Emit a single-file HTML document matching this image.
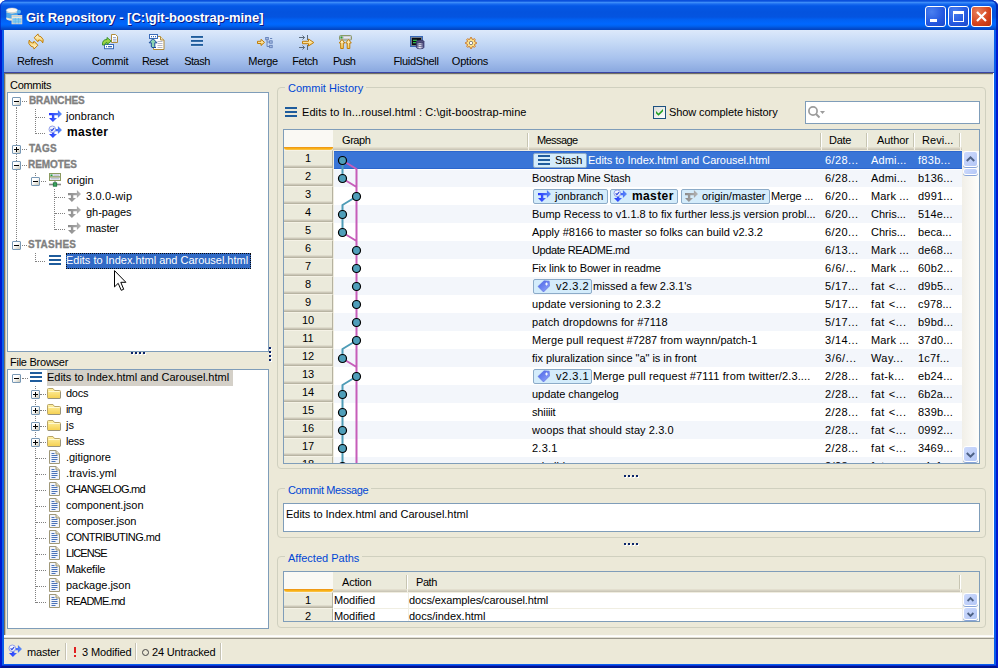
<!DOCTYPE html><html><head><meta charset="utf-8"><title>Git Repository</title><style>
*{box-sizing:border-box;margin:0;padding:0}
html,body{width:998px;height:668px;overflow:hidden}
body{position:relative;background:#fff;font-family:"Liberation Sans",sans-serif;font-size:11px;color:#000;line-height:13px}
.abs,.t,.box,.grp,.grpl,.tbl,svg,.hd,.hsep,.rh,.row,.vd,.hdot,.exp,.tag,.sb{position:absolute}
svg{overflow:visible}
.t{white-space:pre;line-height:13px;height:13px}
.b{font-weight:bold}
.g{color:#808080;font-weight:bold;-webkit-text-stroke:.3px #808080}
.wh{color:#fff}
#frame{left:0;top:0;width:998px;height:668px;background:#0a5eea;border-radius:8px 8px 0 0/6px 6px 0 0;border-left:2px solid #0019cf;border-right:2px solid #0019cf;border-bottom:2px solid #00138c;box-shadow:inset 0 -1px 0 #0831d9}
#title{left:0;top:0;width:998px;height:30px;box-shadow:inset -2px 0 0 rgba(0,20,160,.75),inset 1px 0 0 rgba(0,30,190,.6);border-radius:8px 8px 0 0/6px 6px 0 0;
 background:linear-gradient(to bottom,#0a50dc 0,#0a50dc 1px,#3c8cf8 2.500px,#1a6cf0 4px,#0458e6 6px,#0453de 12px,#0454e0 17px,#0162f4 20px,#0068ff 24px,#0062f0 26px,#0350d4 28px,#0242bc 30px)}
#ttext{left:26px;top:10px;font-weight:bold;font-size:13px;color:#fff;text-shadow:1px 1px 0 #0a1883;line-height:16px;height:16px}
#toolbar{left:4px;top:30px;width:990px;height:42px;background:linear-gradient(to bottom,#dde9fb 0,#c6daf6 12px,#a9c3ee 28px,#8caae0 41px)}
#client{left:4px;top:72px;width:990px;height:592px;background:#ece9d8;border-top:1px solid #3a45a5}
.tbl{top:55px;width:80px;text-align:center;line-height:13px;height:13px;white-space:pre}
.box{background:#fff;border:1px solid #7f9db9}
.grp{border:1px solid #d0d0bf;border-radius:4px}
.grpl{background:#ece9d8;color:#0046d5;padding:0 3px;white-space:pre;line-height:13px;height:13px}
.hd{background:#ebeadb;box-shadow:inset 0 -1px 0 #f0ede0,inset 0 -2px 0 #cbc7b8,inset 0 -3px 0 #d6d2c2,inset 0 -4px 0 #e2dece}
.hsep{width:2px;border-left:1px solid #c7c5b2;border-right:1px solid #fff}
.rh{background:#ebeadb;text-align:center;line-height:15px;border-top:1px solid #f5f2e6;border-right:1px solid #b5b2a0;box-shadow:inset 0 -1px 0 #b8b4a2,inset 0 -2px 0 #cbc7b8,inset 0 -3px 0 #dedbcb}
.row{left:334px;width:628px;height:18px}
.vd{width:0;border-left:1px dotted #808080}
.hdot{height:0;border-top:1px dotted #808080}
.exp{width:9px;height:9px;border:1px solid #7898b5;border-radius:1px;background:linear-gradient(135deg,#fff 0,#fff 40%,#c9c6b6 100%)}
.exp:before{content:"";position:absolute;left:1px;top:3px;width:5px;height:1px;background:#000}
.exp.p:after{content:"";position:absolute;left:3px;top:1px;width:1px;height:5px;background:#000}
.tag{height:15px;border:1px solid #8cabc8;background:#d4ecfb;border-radius:2px}
.sb{width:15px;border:1px solid #fff;border-radius:3px;background:linear-gradient(135deg,#cddafc,#b4c7f6);box-shadow:0 1px 0 #88a4d8}
</style></head><body>
<svg width="0" height="0" style="left:0;top:0"><defs><linearGradient id="gb" x1="0" y1="0" x2="1" y2="0"><stop offset="0" stop-color="#2233ff"/><stop offset="1" stop-color="#5d90f5"/></linearGradient><linearGradient id="gg" x1="0" y1="0" x2="1" y2="0"><stop offset="0" stop-color="#8a8a8a"/><stop offset="1" stop-color="#b4b4b4"/></linearGradient><linearGradient id="gy" x1="0" y1="0" x2="0" y2="1"><stop offset="0" stop-color="#fffbe4"/><stop offset="1" stop-color="#f7c94c"/></linearGradient><linearGradient id="gt" x1="0" y1="0" x2="1" y2="1"><stop offset="0" stop-color="#4a63e6"/><stop offset="1" stop-color="#93a6fa"/></linearGradient><linearGradient id="gf" x1="0" y1="0" x2="0" y2="1"><stop offset="0" stop-color="#fff2a8"/><stop offset="1" stop-color="#f5d04f"/></linearGradient><linearGradient id="gc" x1="0" y1="0" x2="1" y2="0"><stop offset="0" stop-color="#4c4c80"/><stop offset=".45" stop-color="#fafaff"/><stop offset="1" stop-color="#44447a"/></linearGradient></defs></svg>
<div id="frame" class="abs"></div>
<div id="title" class="abs"></div>
<svg style="left:6px;top:8px" width="16" height="16" viewBox="0 0 16 16"><path d="M.3 2.500V10.500Q.3 12.500 6 12.500 11.700 12.500 11.700 10.500V2.500Z" fill="#4ea8ea"/><path d="M.3 9.500V10.500Q.3 12.500 6 12.500 11.700 12.500 11.700 10.500V9.500Q6 11.800 .3 9.500Z" fill="#f0e6d8"/><ellipse cx="6" cy="2.300" rx="5.700" ry="2.200" fill="#fdfaf4" stroke="#ecdcc8" stroke-width=".5"/><path d="M.3 4Q6 6.500 11.700 4" fill="none" stroke="#f0e0cc" stroke-width=".8"/><circle cx="13" cy="3.700" r="2" fill="#5ab0ee"/><rect x="6" y="7.500" width="9.800" height="8.300" fill="#8fd0f4" stroke="#ead8c0" stroke-width=".9"/><path d="M6 9.300H15.800" stroke="#f2e6d4" stroke-width="1.300"/><path d="M6.500 11.800H15.300M6.500 13.800H15.300M9.300 10V15.500M12.500 10V15.500" stroke="#5ab4e8" stroke-width=".6"/></svg>
<div id="ttext" class="t">Git Repository - [C:\git-boostrap-mine]</div>
<div class="abs" style="left:925px;top:6px;width:21px;height:21px;border:1px solid #fff;border-radius:3px;background:radial-gradient(circle at 30% 25%,#4a80f0,#2458e0 60%,#1c48c8)"></div>
<div class="abs" style="left:948px;top:6px;width:21px;height:21px;border:1px solid #fff;border-radius:3px;background:radial-gradient(circle at 30% 25%,#4a80f0,#2458e0 60%,#1c48c8)"></div>
<div class="abs" style="left:971px;top:6px;width:21px;height:21px;border:1px solid #fff;border-radius:3px;background:radial-gradient(circle at 30% 25%,#e8805c,#d4431c 60%,#b8300c)"></div>
<div class="abs" style="left:930px;top:19px;width:7px;height:3px;background:#fff"></div>
<div class="abs" style="left:953px;top:11px;width:11px;height:11px;border:1px solid #fff;border-top-width:3px"></div>
<svg style="left:976px;top:11px" width="11" height="11" viewBox="0 0 11 11"><path d="M1 1L10 10M10 1L1 10" stroke="#fff" stroke-width="2.200"/></svg>
<div id="toolbar" class="abs"></div><div id="client" class="abs"></div>
<div class="abs" style="left:4px;top:73px;width:990px;height:1px;background:#716f64"></div>
<div class="abs" style="left:4px;top:73px;width:1px;height:562px;background:#716f64"></div>
<div class="abs" style="left:5px;top:74px;width:988px;height:1px;background:#d5d2c2"></div>
<div class="abs" style="left:5px;top:74px;width:1px;height:561px;background:#c5c2b2"></div>
<div class="abs" style="left:993px;top:73px;width:1px;height:563px;background:#fff"></div>
<svg style="left:28px;top:33px" width="16" height="17" viewBox="0 0 16 17"><g transform="translate(-28,-33)"><path d="M34.100 37.800L38 33.900 38.300 35.700Q41.600 36.200 43.100 39.500 43.300 41.500 42.700 42.900 42 40.800 40.700 40.500 39.500 40 38.700 40L38 41.700Z" fill="url(#gy)" stroke="#c07c08" stroke-width="1" stroke-linejoin="round"/><path d="M34.100 37.800L38 33.900 38.300 35.700Q41.600 36.200 43.100 39.500 43.300 41.500 42.700 42.900 42 40.800 40.700 40.500 39.500 40 38.700 40L38 41.700Z" transform="rotate(180 36 41.500)" fill="url(#gy)" stroke="#c07c08" stroke-width="1" stroke-linejoin="round"/></g></svg>
<svg style="left:102px;top:33.5px" width="17" height="16" viewBox="0 0 17 16"><path d="M9.500.5H13.500L15.500 2.500V8.500H9.500Z" fill="#fff" stroke="#b08c3c"/><path d="M11 3.500h3M11 5.300h3.500M11 7h3.500" stroke="#8fa0c8" stroke-width=".9"/><rect x="2.500" y="10.500" width="9" height="4.200" fill="#fff" stroke="#3a6ab8"/><path d="M4 12.600h1M6 12.600h4" stroke="#3a6ab8" stroke-width="1.200"/><path d="M.5 11Q.3 8 1.500 6.800 2.500 5.500 5 5.500V3.500L9.200 7 5 10.500V8.500Q3.200 8.500 2.500 11Z" fill="#9cd444" stroke="#2c8a1c" stroke-width=".9" stroke-linejoin="round"/></svg>
<svg style="left:149px;top:34px" width="16" height="16" viewBox="0 0 16 16"><path d="M4.500 2.500H11.500L15 6V15.500H4.500Z" fill="#fff" stroke="#b08c3c"/><path d="M11.500 2.500V6H15" fill="#f0e4c0" stroke="#b08c3c"/><path d="M8.500 7.500h5M8.500 9.500h5M8.500 11.500h5M8.500 13.500h5" stroke="#b4b8c8"/><rect x=".5" y=".5" width="8" height="4" fill="#fff" stroke="#3a6ab8"/><path d="M2 2.600h1M4 2.600h1M6 2.600h1" stroke="#3a6ab8" stroke-width="1.200"/><path d="M4 4.600L8 8.800H5.800V12.500Q6 13.500 7 13.500H3Q2.300 13.300 2.300 12V8.800H.1Z" fill="#8cd4b0" stroke="#1c4c9c" stroke-width="1" stroke-linejoin="round"/></svg>
<svg style="left:191px;top:36px" width="12" height="11" viewBox="0 0 12 11"><path d="M0 0h12v2h-12zM0 4h12v2h-12zM0 8h12v2h-12z" fill="#1f5c9c"/><path d="M0 2.300h12M0 6.300h12M0 10.300h12" stroke="#dce8f8" stroke-width=".6"/></svg>
<svg style="left:257px;top:37px" width="16" height="12" viewBox="0 0 16 12"><path d="M.5 4.300H4V2.300L7.500 5.400 4 8.500V6.500H.5Z" fill="url(#gy)" stroke="#c07c08" stroke-width="1" stroke-linejoin="round"/><path d="M10 2.700V9.500H12.500M10 5H12.500M13 1.500H15.200" stroke="#6a86bc" fill="none"/><rect x="8.700" y=".4" width="2.600" height="2.400" fill="#a8bce0" stroke="#5a78b4" stroke-width=".8"/><rect x="12.600" y="3.800" width="2.600" height="2.400" fill="#a8bce0" stroke="#5a78b4" stroke-width=".8"/><rect x="12.600" y="8.300" width="2.600" height="2.400" fill="#a8bce0" stroke="#5a78b4" stroke-width=".8"/></svg>
<svg style="left:299px;top:35px" width="16" height="15" viewBox="0 0 16 15"><path d="M0 2.500H5.500M3.500 .5L5.500 2.500 3.500 4.500M8.500 0V5M0 12.500H5.500M3.500 10.500L5.500 12.500 3.500 14.500M8.500 10V15" stroke="#5a6a7a" fill="none"/><path d="M3.500 6.300H9.500V4L14.800 7.500 9.500 11V8.700H3.500Z" fill="url(#gy)" stroke="#c07c08" stroke-width="1" stroke-linejoin="round"/></svg>
<svg style="left:338.5px;top:35px" width="13" height="14" viewBox="0 0 13 14"><rect x=".5" y=".5" width="12" height="4.500" rx="1" fill="#c8c8d0" stroke="#8a9a6a"/><rect x="1.500" y="1.500" width="2" height="2" fill="#2ca02c"/><path d="M5 2.500H11" stroke="#e8e8f0" stroke-width="1.400"/><path d="M3 4.500L5.800 8H4.300V13.500H1.700V8H.2Z" fill="url(#gy)" stroke="#c07c08" stroke-width="1" stroke-linejoin="round"/><path d="M9.500 4.500L12.300 8H10.800V13.500H8.200V8H6.700Z" fill="url(#gy)" stroke="#c07c08" stroke-width="1" stroke-linejoin="round"/></svg>
<svg style="left:410px;top:36px" width="15" height="14" viewBox="0 0 15 14"><rect x=".5" y=".5" width="12" height="10" fill="#0c0c14" stroke="#3a6ab8" stroke-width="1"/><rect x="1.500" y="1.500" width="10" height="8" fill="none" stroke="#8c98a8" stroke-width=".8"/><path d="M3 4.300h4M3 6.600h3.500" stroke="#30c048" stroke-width="1.200"/><path d="M6.300 5.500V11.300Q6.300 12.800 10.200 12.800 14 12.800 14 11.300V5.500Z" fill="url(#gc)" stroke="#34346a" stroke-width=".7"/><ellipse cx="10.150" cy="5.500" rx="3.850" ry="1.400" fill="#50507c" stroke="#2c2c5c" stroke-width=".6"/><path d="M6.300 7.700Q10.200 9.400 14 7.700M6.300 9.700Q10.200 11.400 14 9.700" fill="none" stroke="#34346a" stroke-width=".6"/></svg>
<svg style="left:465px;top:36.7px" width="12" height="12" viewBox="0 0 12 12"><path d="M11.47 5.46L11.47 6.54L9.73 7.13L9.44 7.84L10.25 9.49L9.49 10.25L7.84 9.44L7.13 9.73L6.54 11.47L5.46 11.47L4.87 9.73L4.16 9.44L2.51 10.25L1.75 9.49L2.56 7.84L2.27 7.13L0.53 6.54L0.53 5.46L2.27 4.87L2.56 4.16L1.75 2.51L2.51 1.75L4.16 2.56L4.87 2.27L5.46 0.53L6.54 0.53L7.13 2.27L7.84 2.56L9.49 1.75L10.25 2.51L9.44 4.16L9.73 4.87Z" fill="#ffe48c" stroke="#c8782a" stroke-width="1" stroke-linejoin="round"/><circle cx="6" cy="6" r="1.700" fill="#fff" stroke="#787878" stroke-width=".9"/></svg>
<div class="tbl" style="left:-5px;letter-spacing:-0.36px">Refresh</div>
<div class="tbl" style="left:70px;letter-spacing:-0.24px">Commit</div>
<div class="tbl" style="left:115px;letter-spacing:-0.53px">Reset</div>
<div class="tbl" style="left:157px;letter-spacing:-0.48px">Stash</div>
<div class="tbl" style="left:223px;letter-spacing:-0.38px">Merge</div>
<div class="tbl" style="left:265px;letter-spacing:-0.37px">Fetch</div>
<div class="tbl" style="left:304px;letter-spacing:-0.73px">Push</div>
<div class="tbl" style="left:376px;letter-spacing:-0.32px">FluidShell</div>
<div class="tbl" style="left:430px;letter-spacing:-0.23px">Options</div>
<div class="t" style="left:10px;top:79px;letter-spacing:-0.31px">Commits</div>
<div class="box" style="left:7px;top:92px;width:262px;height:260px"></div>
<div class="t" style="left:10px;top:356px;letter-spacing:-0.25px">File Browser</div>
<div class="box" style="left:7px;top:369px;width:262px;height:260px"></div>
<div class="vd" style="left:16px;top:107px;height:134px"></div>
<div class="hdot" style="left:22px;top:101px;width:5px"></div>
<div class="hdot" style="left:22px;top:149px;width:5px"></div>
<div class="hdot" style="left:22px;top:165px;width:5px"></div>
<div class="hdot" style="left:22px;top:245px;width:5px"></div>
<div class="vd" style="left:35px;top:109px;height:25px"></div>
<div class="hdot" style="left:36px;top:117px;width:9px"></div>
<div class="hdot" style="left:36px;top:133px;width:9px"></div>
<div class="vd" style="left:35px;top:173px;height:3px"></div>
<div class="hdot" style="left:41px;top:181px;width:5px"></div>
<div class="vd" style="left:54px;top:189px;height:41px"></div>
<div class="hdot" style="left:55px;top:197px;width:10px"></div>
<div class="hdot" style="left:55px;top:213px;width:10px"></div>
<div class="hdot" style="left:55px;top:229px;width:10px"></div>
<div class="vd" style="left:35px;top:253px;height:9px"></div>
<div class="hdot" style="left:36px;top:261px;width:9px"></div>
<div class="exp" style="left:12px;top:97px"></div>
<div class="exp p" style="left:12px;top:145px"></div>
<div class="exp" style="left:12px;top:161px"></div>
<div class="exp" style="left:31px;top:177px"></div>
<div class="exp" style="left:12px;top:241px"></div>
<div class="t g" style="left:29px;top:94px;font-size:10px;letter-spacing:-0.14px;">BRANCHES</div>
<div class="t g" style="left:29px;top:142px;font-size:10px;letter-spacing:0.22px;">TAGS</div>
<div class="t g" style="left:28px;top:158px;font-size:10px;letter-spacing:-0.07px;">REMOTES</div>
<div class="t g" style="left:28px;top:238px;font-size:10px;letter-spacing:0.25px;">STASHES</div>
<svg style="left:49px;top:110px" width="13" height="13" viewBox="0 0 13 13"><path d="M0 3H8.900V0L13 4.100 8.900 8.100V5.300H5.300V8H8L3.900 12 0 8H2.900V5.300H0Z" fill="url(#gb)"/></svg>
<div class="t " style="left:66px;top:110px;letter-spacing:0.02px;">jonbranch</div>
<svg style="left:49px;top:126px" width="13" height="13" viewBox="0 0 13 13"><path d="M6 3H8.900V0L13 4.100 8.900 8.100V5.300H5.300V8H8L3.900 12 0 8H2.900V7Z" fill="url(#gb)"/><circle cx="3.300" cy="3.300" r="3.300" fill="#f2f4ff" stroke="#8896e6" stroke-width=".9"/><path d="M1.600 3.300l1.300 1.400 2.200-2.600" fill="none" stroke="#2a44d8" stroke-width="1.100"/></svg>
<div class="t b" style="left:67px;top:126px;font-size:12px;letter-spacing:0.33px;">master</div>
<svg style="left:49px;top:173px" width="12" height="14" viewBox="0 0 12 14"><rect x=".5" y=".5" width="11" height="3.500" fill="#e4e6ee" stroke="#8c9a60"/><rect x=".5" y="4" width="11" height="3.500" fill="#e4e6ee" stroke="#8c9a60"/><rect x="1.500" y="1.500" width="2" height="1.500" fill="#18a038"/><path d="M4.500 2.200H10M2 5.700H10" stroke="#b8bcd0" stroke-width="1"/><path d="M6 8V11" stroke="#808080" stroke-width="1.200"/><path d="M0 11.500H12" stroke="#8a8a8a" stroke-width="1.600"/><rect x="4.300" y="9.800" width="3.400" height="3.400" fill="#3aa860" stroke="#1a7038" stroke-width=".8"/></svg>
<div class="t " style="left:67px;top:174px;letter-spacing:-0.08px;">origin</div>
<svg style="left:68px;top:190px" width="13" height="13" viewBox="0 0 13 13"><path d="M0 3H8.900V0L13 4.100 8.900 8.100V5.300H5.300V8H8L3.900 12 0 8H2.900V5.300H0Z" fill="url(#gg)"/></svg>
<div class="t " style="left:86px;top:190px;letter-spacing:0.17px;">3.0.0-wip</div>
<svg style="left:68px;top:206px" width="13" height="13" viewBox="0 0 13 13"><path d="M0 3H8.900V0L13 4.100 8.900 8.100V5.300H5.300V8H8L3.900 12 0 8H2.900V5.300H0Z" fill="url(#gg)"/></svg>
<div class="t " style="left:86px;top:206px;letter-spacing:-0.05px;">gh-pages</div>
<svg style="left:68px;top:222px" width="13" height="13" viewBox="0 0 13 13"><path d="M0 3H8.900V0L13 4.100 8.900 8.100V5.300H5.300V8H8L3.900 12 0 8H2.900V5.300H0Z" fill="url(#gg)"/></svg>
<div class="t " style="left:86px;top:222px;letter-spacing:-0.12px;">master</div>
<svg style="left:49px;top:255px" width="12" height="10" viewBox="0 0 12 10"><path d="M0 0h12v2h-12zM0 4h12v2h-12zM0 8h12v2h-12z" fill="#1f5c9c"/></svg>
<div class="abs" style="left:66px;top:253px;width:185px;height:16px;background:#316ac5;border:1px dotted #0a0a0a"></div>
<div class="t wh" style="left:66px;top:254px;letter-spacing:-0.02px;">Edits to Index.html and Carousel.html</div>
<svg style="left:114px;top:270px" width="13" height="21" viewBox="0 0 13 21"><path d="M.5.6V16.900L4.200 13.300 7.200 20.300 9.700 19.300 6.800 12.300H11.900Z" fill="#fff" stroke="#000" stroke-width="1"/></svg>
<div class="hdot" style="left:22px;top:378px;width:6px"></div>
<div class="exp" style="left:12px;top:374px"></div>
<svg style="left:30px;top:372px" width="12" height="10" viewBox="0 0 12 10"><path d="M0 0h12v2h-12zM0 4h12v2h-12zM0 8h12v2h-12z" fill="#1f5c9c"/></svg>
<div class="abs" style="left:47px;top:370px;width:186px;height:16px;background:#d4d0c8"></div>
<div class="t " style="left:47px;top:371px;letter-spacing:-0.02px;">Edits to Index.html and Carousel.html</div>
<div class="vd" style="left:35px;top:386px;height:217px"></div>
<div class="exp p" style="left:31px;top:390px"></div>
<div class="hdot" style="left:40px;top:394px;width:6px"></div>
<svg style="left:47px;top:388px" width="14" height="11" viewBox="0 0 14 11"><path d="M.5 1.500Q.5 .5 1.500 .5H6L7.500 2.500H12.500Q13.500 2.500 13.500 3.500V9.500Q13.500 10.500 12.500 10.500H1.500Q.5 10.500 .5 9.500Z" fill="url(#gf)" stroke="#b8a468"/><path d="M1.500 3.500H12.500" stroke="#fff9d0"/><path d="M13.500 4V10L13 10.500H1" fill="none" stroke="#8c8c80" stroke-opacity=".7"/></svg>
<div class="t " style="left:66px;top:387px;letter-spacing:-0.28px;">docs</div>
<div class="exp p" style="left:31px;top:406px"></div>
<div class="hdot" style="left:40px;top:410px;width:6px"></div>
<svg style="left:47px;top:404px" width="14" height="11" viewBox="0 0 14 11"><path d="M.5 1.500Q.5 .5 1.500 .5H6L7.500 2.500H12.500Q13.500 2.500 13.500 3.500V9.500Q13.500 10.500 12.500 10.500H1.500Q.5 10.500 .5 9.500Z" fill="url(#gf)" stroke="#b8a468"/><path d="M1.500 3.500H12.500" stroke="#fff9d0"/><path d="M13.500 4V10L13 10.500H1" fill="none" stroke="#8c8c80" stroke-opacity=".7"/></svg>
<div class="t " style="left:66px;top:403px;letter-spacing:-0.66px;">img</div>
<div class="exp p" style="left:31px;top:422px"></div>
<div class="hdot" style="left:40px;top:426px;width:6px"></div>
<svg style="left:47px;top:420px" width="14" height="11" viewBox="0 0 14 11"><path d="M.5 1.500Q.5 .5 1.500 .5H6L7.500 2.500H12.500Q13.500 2.500 13.500 3.500V9.500Q13.500 10.500 12.500 10.500H1.500Q.5 10.500 .5 9.500Z" fill="url(#gf)" stroke="#b8a468"/><path d="M1.500 3.500H12.500" stroke="#fff9d0"/><path d="M13.500 4V10L13 10.500H1" fill="none" stroke="#8c8c80" stroke-opacity=".7"/></svg>
<div class="t " style="left:66px;top:419px;">js</div>
<div class="exp p" style="left:31px;top:438px"></div>
<div class="hdot" style="left:40px;top:442px;width:6px"></div>
<svg style="left:47px;top:436px" width="14" height="11" viewBox="0 0 14 11"><path d="M.5 1.500Q.5 .5 1.500 .5H6L7.500 2.500H12.500Q13.500 2.500 13.500 3.500V9.500Q13.500 10.500 12.500 10.500H1.500Q.5 10.500 .5 9.500Z" fill="url(#gf)" stroke="#b8a468"/><path d="M1.500 3.500H12.500" stroke="#fff9d0"/><path d="M13.500 4V10L13 10.500H1" fill="none" stroke="#8c8c80" stroke-opacity=".7"/></svg>
<div class="t " style="left:66px;top:435px;letter-spacing:-0.39px;">less</div>
<div class="hdot" style="left:36px;top:458px;width:10px"></div>
<svg style="left:49px;top:450px" width="11" height="14" viewBox="0 0 11 14"><path d="M.5.5H7L10.500 4V13.500H.5Z" fill="#f2f5fc" stroke="#a09878"/><path d="M7 .5V4H10.500" fill="#e2dcc4" stroke="#a09878"/><path d="M2.500 3.500h3M2.500 5.500h6M2.500 7.500h6M2.500 9.500h6M2.500 11.500h4" stroke="#4a72b8"/></svg>
<div class="t " style="left:66px;top:451px;letter-spacing:-0.03px;">.gitignore</div>
<div class="hdot" style="left:36px;top:474px;width:10px"></div>
<svg style="left:49px;top:466px" width="11" height="14" viewBox="0 0 11 14"><path d="M.5.5H7L10.500 4V13.500H.5Z" fill="#f2f5fc" stroke="#a09878"/><path d="M7 .5V4H10.500" fill="#e2dcc4" stroke="#a09878"/><path d="M2.500 3.500h3M2.500 5.500h6M2.500 7.500h6M2.500 9.500h6M2.500 11.500h4" stroke="#4a72b8"/></svg>
<div class="t " style="left:66px;top:467px;letter-spacing:0.1px;">.travis.yml</div>
<div class="hdot" style="left:36px;top:490px;width:10px"></div>
<svg style="left:49px;top:482px" width="11" height="14" viewBox="0 0 11 14"><path d="M.5.5H7L10.500 4V13.500H.5Z" fill="#f2f5fc" stroke="#a09878"/><path d="M7 .5V4H10.500" fill="#e2dcc4" stroke="#a09878"/><path d="M2.500 3.500h3M2.500 5.500h6M2.500 7.500h6M2.500 9.500h6M2.500 11.500h4" stroke="#4a72b8"/></svg>
<div class="t " style="left:66px;top:483px;letter-spacing:-0.83px;">CHANGELOG.md</div>
<div class="hdot" style="left:36px;top:506px;width:10px"></div>
<svg style="left:49px;top:498px" width="11" height="14" viewBox="0 0 11 14"><path d="M.5.5H7L10.500 4V13.500H.5Z" fill="#f2f5fc" stroke="#a09878"/><path d="M7 .5V4H10.500" fill="#e2dcc4" stroke="#a09878"/><path d="M2.500 3.500h3M2.500 5.500h6M2.500 7.500h6M2.500 9.500h6M2.500 11.500h4" stroke="#4a72b8"/></svg>
<div class="t " style="left:66px;top:499px;letter-spacing:-0.01px;">component.json</div>
<div class="hdot" style="left:36px;top:522px;width:10px"></div>
<svg style="left:49px;top:514px" width="11" height="14" viewBox="0 0 11 14"><path d="M.5.5H7L10.500 4V13.500H.5Z" fill="#f2f5fc" stroke="#a09878"/><path d="M7 .5V4H10.500" fill="#e2dcc4" stroke="#a09878"/><path d="M2.500 3.500h3M2.500 5.500h6M2.500 7.500h6M2.500 9.500h6M2.500 11.500h4" stroke="#4a72b8"/></svg>
<div class="t " style="left:66px;top:515px;letter-spacing:-0.04px;">composer.json</div>
<div class="hdot" style="left:36px;top:538px;width:10px"></div>
<svg style="left:49px;top:530px" width="11" height="14" viewBox="0 0 11 14"><path d="M.5.5H7L10.500 4V13.500H.5Z" fill="#f2f5fc" stroke="#a09878"/><path d="M7 .5V4H10.500" fill="#e2dcc4" stroke="#a09878"/><path d="M2.500 3.500h3M2.500 5.500h6M2.500 7.500h6M2.500 9.500h6M2.500 11.500h4" stroke="#4a72b8"/></svg>
<div class="t " style="left:66px;top:531px;letter-spacing:-0.54px;">CONTRIBUTING.md</div>
<div class="hdot" style="left:36px;top:554px;width:10px"></div>
<svg style="left:49px;top:546px" width="11" height="14" viewBox="0 0 11 14"><path d="M.5.5H7L10.500 4V13.500H.5Z" fill="#f2f5fc" stroke="#a09878"/><path d="M7 .5V4H10.500" fill="#e2dcc4" stroke="#a09878"/><path d="M2.500 3.500h3M2.500 5.500h6M2.500 7.500h6M2.500 9.500h6M2.500 11.500h4" stroke="#4a72b8"/></svg>
<div class="t " style="left:66px;top:547px;letter-spacing:-0.93px;">LICENSE</div>
<div class="hdot" style="left:36px;top:570px;width:10px"></div>
<svg style="left:49px;top:562px" width="11" height="14" viewBox="0 0 11 14"><path d="M.5.5H7L10.500 4V13.500H.5Z" fill="#f2f5fc" stroke="#a09878"/><path d="M7 .5V4H10.500" fill="#e2dcc4" stroke="#a09878"/><path d="M2.500 3.500h3M2.500 5.500h6M2.500 7.500h6M2.500 9.500h6M2.500 11.500h4" stroke="#4a72b8"/></svg>
<div class="t " style="left:66px;top:563px;letter-spacing:-0.21px;">Makefile</div>
<div class="hdot" style="left:36px;top:586px;width:10px"></div>
<svg style="left:49px;top:578px" width="11" height="14" viewBox="0 0 11 14"><path d="M.5.5H7L10.500 4V13.500H.5Z" fill="#f2f5fc" stroke="#a09878"/><path d="M7 .5V4H10.500" fill="#e2dcc4" stroke="#a09878"/><path d="M2.500 3.500h3M2.500 5.500h6M2.500 7.500h6M2.500 9.500h6M2.500 11.500h4" stroke="#4a72b8"/></svg>
<div class="t " style="left:66px;top:579px;letter-spacing:-0.03px;">package.json</div>
<div class="hdot" style="left:36px;top:602px;width:10px"></div>
<svg style="left:49px;top:594px" width="11" height="14" viewBox="0 0 11 14"><path d="M.5.5H7L10.500 4V13.500H.5Z" fill="#f2f5fc" stroke="#a09878"/><path d="M7 .5V4H10.500" fill="#e2dcc4" stroke="#a09878"/><path d="M2.500 3.500h3M2.500 5.500h6M2.500 7.500h6M2.500 9.500h6M2.500 11.500h4" stroke="#4a72b8"/></svg>
<div class="t " style="left:66px;top:595px;letter-spacing:-0.74px;">README.md</div>
<div class="grp" style="left:277px;top:87px;width:709px;height:382px"></div>
<div class="grpl" style="left:285px;top:82px">Commit History</div>
<div class="grp" style="left:277px;top:488px;width:709px;height:50px"></div>
<div class="grpl" style="left:285px;top:484px;letter-spacing:-.38px">Commit Message</div>
<div class="grp" style="left:277px;top:556px;width:709px;height:72px"></div>
<div class="grpl" style="left:285px;top:552px">Affected Paths</div>
<svg style="left:285px;top:107px" width="12" height="10" viewBox="0 0 12 10"><path d="M0 0h12v2h-12zM0 4h12v2h-12zM0 8h12v2h-12z" fill="#1f5c9c"/></svg>
<div class="t " style="left:302px;top:106px;letter-spacing:0.08px;">Edits to In...rousel.html : C:\git-boostrap-mine</div>
<div class="abs" style="left:653px;top:106px;width:13px;height:13px;border:1px solid #1c5180;background:linear-gradient(135deg,#dcdcd7,#fff)"></div>
<svg style="left:656px;top:109px" width="7" height="7" viewBox="0 0 7 7"><path d="M0 2l2.500 2.500L7 0v2.200L2.500 6.700 0 4.200z" fill="#21a121"/></svg>
<div class="t " style="left:669px;top:106px;letter-spacing:-0.1px;">Show complete history</div>
<div class="box" style="left:805px;top:101px;width:175px;height:23px"></div>
<svg style="left:800px;top:98px" width="40" height="30" viewBox="0 0 40 30"><circle cx="13" cy="13" r="4.100" fill="none" stroke="#9c9c9c" stroke-width="1.700"/><path d="M16 16l3.500 3.500" stroke="#9c9c9c" stroke-width="2"/><path d="M20 13h5l-2.500 3z" fill="#9c9c9c"/></svg>
<div class="box" style="left:283px;top:129px;width:697px;height:335px"></div>
<div class="abs" style="left:284px;top:130px;width:695px;height:333px;overflow:hidden"><div class="abs" style="left:-284px;top:-130px;width:998px;height:668px">
<div class="abs" style="left:284px;top:130px;width:695px;height:21px;background:#ece9d8"></div>
<div class="hd" style="left:333px;top:130px;width:629px;height:21px"></div>
<div class="abs" style="left:284px;top:130px;width:49px;height:17px;background:#faf9f4"></div>
<div class="abs" style="left:284px;top:147px;width:49px;height:3px;background:linear-gradient(to bottom,#e68b2c,#f8a900 34%,#f9c654);border-radius:0 0 3px 3px"></div>
<div class="hsep" style="left:527px;top:133px;height:14px"></div><div class="abs" style="left:528px;top:147px;width:1px;height:3px;background:#f4f2e8"></div>
<div class="hsep" style="left:820px;top:133px;height:14px"></div><div class="abs" style="left:821px;top:147px;width:1px;height:3px;background:#f4f2e8"></div>
<div class="hsep" style="left:866px;top:133px;height:14px"></div><div class="abs" style="left:867px;top:147px;width:1px;height:3px;background:#f4f2e8"></div>
<div class="hsep" style="left:913px;top:133px;height:14px"></div><div class="abs" style="left:914px;top:147px;width:1px;height:3px;background:#f4f2e8"></div>
<div class="hsep" style="left:959px;top:133px;height:14px"></div><div class="abs" style="left:960px;top:147px;width:1px;height:3px;background:#f4f2e8"></div>
<div class="t " style="left:342px;top:134px;letter-spacing:-0.43px;">Graph</div>
<div class="t " style="left:537px;top:134px;letter-spacing:-0.59px;">Message</div>
<div class="t " style="left:829px;top:134px;letter-spacing:-0.29px;">Date</div>
<div class="t " style="left:877px;top:134px;letter-spacing:-0.09px;">Author</div>
<div class="t " style="left:922px;top:134px;letter-spacing:0.04px;">Revi...</div>
<div class="abs" style="left:333px;top:150px;width:1px;height:320px;background:#f0ede0"></div>
<div class="row" style="top:151px;background:#3975d7;border-top:1px solid #2b66cd;border-bottom:1px solid #2b66cd"></div>
<div class="rh" style="left:284px;top:150px;width:49px;height:18px">1</div>
<div class="t wh" style="left:825px;top:154px;letter-spacing:0.4px;">6/28...</div>
<div class="t wh" style="left:871px;top:154px;letter-spacing:0.16px;">Admi...</div>
<div class="t wh" style="left:918px;top:154px;letter-spacing:0.29px;">f83b...</div>
<div class="row" style="top:169px;background:#f3f6fb;border-top:1px solid #fff"></div>
<div class="rh" style="left:284px;top:168px;width:49px;height:18px">2</div>
<div class="t " style="left:825px;top:172px;letter-spacing:0.4px;">6/28...</div>
<div class="t " style="left:871px;top:172px;letter-spacing:0.16px;">Admi...</div>
<div class="t " style="left:918px;top:172px;letter-spacing:0.2px;">b136...</div>
<div class="row" style="top:187px;background:#fff"></div>
<div class="rh" style="left:284px;top:186px;width:49px;height:18px">3</div>
<div class="t " style="left:825px;top:190px;letter-spacing:0.4px;">6/20...</div>
<div class="t " style="left:871px;top:190px;letter-spacing:0.16px;">Mark ...</div>
<div class="t " style="left:918px;top:190px;letter-spacing:0.2px;">d991...</div>
<div class="row" style="top:205px;background:#f3f6fb"></div>
<div class="rh" style="left:284px;top:204px;width:49px;height:18px">4</div>
<div class="t " style="left:825px;top:208px;letter-spacing:0.4px;">6/20...</div>
<div class="t " style="left:871px;top:208px;letter-spacing:0.01px;">Chris...</div>
<div class="t " style="left:918px;top:208px;letter-spacing:0.15px;">514e...</div>
<div class="row" style="top:223px;background:#fff"></div>
<div class="rh" style="left:284px;top:222px;width:49px;height:18px">5</div>
<div class="t " style="left:825px;top:226px;letter-spacing:0.4px;">6/20...</div>
<div class="t " style="left:871px;top:226px;letter-spacing:0.01px;">Chris...</div>
<div class="t " style="left:918px;top:226px;letter-spacing:0.08px;">beca...</div>
<div class="row" style="top:241px;background:#f3f6fb"></div>
<div class="rh" style="left:284px;top:240px;width:49px;height:18px">6</div>
<div class="t " style="left:825px;top:244px;letter-spacing:0.4px;">6/13...</div>
<div class="t " style="left:871px;top:244px;letter-spacing:0.16px;">Mark ...</div>
<div class="t " style="left:918px;top:244px;letter-spacing:0.17px;">de68...</div>
<div class="row" style="top:259px;background:#fff"></div>
<div class="rh" style="left:284px;top:258px;width:49px;height:18px">7</div>
<div class="t " style="left:825px;top:262px;letter-spacing:0.61px;">6/6/...</div>
<div class="t " style="left:871px;top:262px;letter-spacing:0.16px;">Mark ...</div>
<div class="t " style="left:918px;top:262px;letter-spacing:0.2px;">60b2...</div>
<div class="row" style="top:277px;background:#f3f6fb"></div>
<div class="rh" style="left:284px;top:276px;width:49px;height:18px">8</div>
<div class="t " style="left:825px;top:280px;letter-spacing:0.4px;">5/17...</div>
<div class="t " style="left:871px;top:280px;letter-spacing:0.6px;">fat &lt;...</div>
<div class="t " style="left:918px;top:280px;letter-spacing:0.21px;">d9b5...</div>
<div class="row" style="top:295px;background:#fff"></div>
<div class="rh" style="left:284px;top:294px;width:49px;height:18px">9</div>
<div class="t " style="left:825px;top:298px;letter-spacing:0.4px;">5/17...</div>
<div class="t " style="left:871px;top:298px;letter-spacing:0.6px;">fat &lt;...</div>
<div class="t " style="left:918px;top:298px;letter-spacing:0.14px;">c978...</div>
<div class="row" style="top:313px;background:#f3f6fb"></div>
<div class="rh" style="left:284px;top:312px;width:49px;height:18px">10</div>
<div class="t " style="left:825px;top:316px;letter-spacing:0.4px;">5/17...</div>
<div class="t " style="left:871px;top:316px;letter-spacing:0.6px;">fat &lt;...</div>
<div class="t " style="left:918px;top:316px;letter-spacing:0.23px;">b9bd...</div>
<div class="row" style="top:331px;background:#fff"></div>
<div class="rh" style="left:284px;top:330px;width:49px;height:18px">11</div>
<div class="t " style="left:825px;top:334px;letter-spacing:0.4px;">3/14...</div>
<div class="t " style="left:871px;top:334px;letter-spacing:0.16px;">Mark ...</div>
<div class="t " style="left:918px;top:334px;letter-spacing:0.2px;">37d0...</div>
<div class="row" style="top:349px;background:#f3f6fb"></div>
<div class="rh" style="left:284px;top:348px;width:49px;height:18px">12</div>
<div class="t " style="left:825px;top:352px;letter-spacing:0.61px;">3/6/...</div>
<div class="t " style="left:871px;top:352px;letter-spacing:0.4px;">Way...</div>
<div class="t " style="left:918px;top:352px;letter-spacing:0.23px;">1c7f...</div>
<div class="row" style="top:367px;background:#fff"></div>
<div class="rh" style="left:284px;top:366px;width:49px;height:18px">13</div>
<div class="t " style="left:825px;top:370px;letter-spacing:0.4px;">2/28...</div>
<div class="t " style="left:871px;top:370px;letter-spacing:0.37px;">fat-k...</div>
<div class="t " style="left:918px;top:370px;letter-spacing:0.17px;">eb24...</div>
<div class="row" style="top:385px;background:#f3f6fb"></div>
<div class="rh" style="left:284px;top:384px;width:49px;height:18px">14</div>
<div class="t " style="left:825px;top:388px;letter-spacing:0.4px;">2/28...</div>
<div class="t " style="left:871px;top:388px;letter-spacing:0.6px;">fat &lt;...</div>
<div class="t " style="left:918px;top:388px;letter-spacing:0.16px;">6b2a...</div>
<div class="row" style="top:403px;background:#fff"></div>
<div class="rh" style="left:284px;top:402px;width:49px;height:18px">15</div>
<div class="t " style="left:825px;top:406px;letter-spacing:0.4px;">2/28...</div>
<div class="t " style="left:871px;top:406px;letter-spacing:0.6px;">fat &lt;...</div>
<div class="t " style="left:918px;top:406px;letter-spacing:0.2px;">839b...</div>
<div class="row" style="top:421px;background:#f3f6fb"></div>
<div class="rh" style="left:284px;top:420px;width:49px;height:18px">16</div>
<div class="t " style="left:825px;top:424px;letter-spacing:0.4px;">2/28...</div>
<div class="t " style="left:871px;top:424px;letter-spacing:0.6px;">fat &lt;...</div>
<div class="t " style="left:918px;top:424px;letter-spacing:0.18px;">0992...</div>
<div class="row" style="top:439px;background:#fff"></div>
<div class="rh" style="left:284px;top:438px;width:49px;height:18px">17</div>
<div class="t " style="left:825px;top:442px;letter-spacing:0.4px;">2/28...</div>
<div class="t " style="left:871px;top:442px;letter-spacing:0.6px;">fat &lt;...</div>
<div class="t " style="left:918px;top:442px;letter-spacing:0.18px;">3469...</div>
<div class="row" style="top:457px;background:#f3f6fb"></div>
<div class="rh" style="left:284px;top:456px;width:49px;height:18px">18</div>
<div class="t " style="left:825px;top:460px;letter-spacing:0.4px;">2/28...</div>
<div class="t " style="left:871px;top:460px;letter-spacing:0.6px;">fat &lt;...</div>
<div class="t " style="left:918px;top:460px;letter-spacing:0.1px;">a4c1...</div>
<div class="tag" style="left:533px;top:153px;width:54px"></div>
<svg style="left:538px;top:155px" width="12" height="10" viewBox="0 0 12 10"><path d="M0 0h12v2h-12zM0 4h12v2h-12zM0 8h12v2h-12z" fill="#1f5c9c"/></svg>
<div class="t " style="left:555px;top:154px;letter-spacing:-0.16px;">Stash</div>
<div class="t wh" style="left:588px;top:154px;letter-spacing:-0.03px;">Edits to Index.html and Carousel.html</div>
<div class="t " style="left:532px;top:172px;letter-spacing:-0.19px;">Boostrap Mine Stash</div>
<div class="tag" style="left:533px;top:189px;width:75px"></div>
<svg style="left:538px;top:190px" width="13" height="13" viewBox="0 0 13 13"><path d="M0 3H8.900V0L13 4.100 8.900 8.100V5.300H5.300V8H8L3.900 12 0 8H2.900V5.300H0Z" fill="url(#gb)"/></svg>
<div class="t " style="left:555px;top:190px;letter-spacing:0.02px;">jonbranch</div>
<div class="tag" style="left:610px;top:189px;width:68px"></div>
<svg style="left:614px;top:190px" width="13" height="13" viewBox="0 0 13 13"><path d="M6 3H8.900V0L13 4.100 8.900 8.100V5.300H5.300V8H8L3.900 12 0 8H2.900V7Z" fill="url(#gb)"/><circle cx="3.300" cy="3.300" r="3.300" fill="#f2f4ff" stroke="#8896e6" stroke-width=".9"/><path d="M1.600 3.300l1.300 1.400 2.200-2.600" fill="none" stroke="#2a44d8" stroke-width="1.100"/></svg>
<div class="t b" style="left:632px;top:190px;font-size:12px;letter-spacing:0.39px;">master</div>
<div class="tag" style="left:681px;top:189px;width:89px"></div>
<svg style="left:685px;top:190px" width="13" height="13" viewBox="0 0 13 13"><path d="M0 3H8.900V0L13 4.100 8.900 8.100V5.300H5.300V8H8L3.900 12 0 8H2.900V5.300H0Z" fill="url(#gg)"/></svg>
<div class="t " style="left:702px;top:190px;letter-spacing:-0.01px;">origin/master</div>
<div class="t " style="left:771px;top:190px;letter-spacing:-0.14px;">Merge ...</div>
<div class="t " style="left:532px;top:208px;">Bump Recess to v1.1.8 to fix further less.js version probl...</div>
<div class="t " style="left:532px;top:226px;letter-spacing:0.01px;">Apply #8166 to master so folks can build v2.3.2</div>
<div class="t " style="left:532px;top:244px;letter-spacing:-0.4px;">Update README.md</div>
<div class="t " style="left:532px;top:262px;letter-spacing:-0.15px;">Fix link to Bower in readme</div>
<div class="tag" style="left:533px;top:279px;width:59px"></div>
<svg style="left:537px;top:280px" width="13" height="13" viewBox="0 0 13 13"><path d="M1 6.500L7 .8 12.200 1.200 12.500 6 6.500 12Z" fill="url(#gt)" stroke="#5468e0" stroke-width=".6"/><path d="M9.500 2.500v3M8 4h3" stroke="#fff" stroke-width=".9"/></svg>
<div class="t " style="left:556px;top:280px;letter-spacing:0.53px;">v2.3.2</div>
<div class="t " style="left:593px;top:280px;letter-spacing:-0.03px;">missed a few 2.3.1's</div>
<div class="t " style="left:532px;top:298px;letter-spacing:0.09px;">update versioning to 2.3.2</div>
<div class="t " style="left:532px;top:316px;letter-spacing:0.13px;">patch dropdowns for #7118</div>
<div class="t " style="left:532px;top:334px;letter-spacing:0.02px;">Merge pull request #7287 from waynn/patch-1</div>
<div class="t " style="left:532px;top:352px;letter-spacing:-0.04px;">fix pluralization since "a" is in front</div>
<div class="tag" style="left:533px;top:369px;width:59px"></div>
<svg style="left:537px;top:370px" width="13" height="13" viewBox="0 0 13 13"><path d="M1 6.500L7 .8 12.200 1.200 12.500 6 6.500 12Z" fill="url(#gt)" stroke="#5468e0" stroke-width=".6"/><path d="M9.500 2.500v3M8 4h3" stroke="#fff" stroke-width=".9"/></svg>
<div class="t " style="left:556px;top:370px;letter-spacing:0.53px;">v2.3.1</div>
<div class="t " style="left:593px;top:370px;letter-spacing:0.14px;">Merge pull request #7111 from twitter/2.3....</div>
<div class="t " style="left:532px;top:388px;letter-spacing:-0.05px;">update changelog</div>
<div class="t " style="left:532px;top:406px;letter-spacing:-0.14px;">shiiiit</div>
<div class="t " style="left:532px;top:424px;letter-spacing:0.08px;">woops that should stay 2.3.0</div>
<div class="t " style="left:532px;top:442px;letter-spacing:0.23px;">2.3.1</div>
<div class="t " style="left:532px;top:460px;">rebuild</div>
<svg style="left:0;top:0" width="998" height="668" viewBox="0 0 998 668" fill="none" stroke-width="2" stroke-linejoin="round"><path stroke="#c65db9" d="M342.5 160.5L356.5 169V475M342.5 178.5L356.5 187M342.5 232.5L356.5 241M342.5 358.5L356.5 367"/><path stroke="#4e9cb7" d="M342.5 160.5V178.5M356.5 196.5L342.5 205V232.5M356.5 340.5L342.5 349V358.5M356.5 376.5L342.5 385V475"/><circle cx="342.5" cy="160.5" r="4" fill="#4f9eb9" stroke="#000" stroke-width="1.200"/><circle cx="342.5" cy="178.5" r="4" fill="#4f9eb9" stroke="#000" stroke-width="1.200"/><circle cx="356.5" cy="196.5" r="4" fill="#4f9eb9" stroke="#000" stroke-width="1.200"/><circle cx="342.5" cy="214.5" r="4" fill="#4f9eb9" stroke="#000" stroke-width="1.200"/><circle cx="342.5" cy="232.5" r="4" fill="#4f9eb9" stroke="#000" stroke-width="1.200"/><circle cx="356.5" cy="250.5" r="4" fill="#4f9eb9" stroke="#000" stroke-width="1.200"/><circle cx="356.5" cy="268.5" r="4" fill="#4f9eb9" stroke="#000" stroke-width="1.200"/><circle cx="356.5" cy="286.5" r="4" fill="#4f9eb9" stroke="#000" stroke-width="1.200"/><circle cx="356.5" cy="304.5" r="4" fill="#4f9eb9" stroke="#000" stroke-width="1.200"/><circle cx="356.5" cy="322.5" r="4" fill="#4f9eb9" stroke="#000" stroke-width="1.200"/><circle cx="356.5" cy="340.5" r="4" fill="#4f9eb9" stroke="#000" stroke-width="1.200"/><circle cx="342.5" cy="358.5" r="4" fill="#4f9eb9" stroke="#000" stroke-width="1.200"/><circle cx="356.5" cy="376.5" r="4" fill="#4f9eb9" stroke="#000" stroke-width="1.200"/><circle cx="342.5" cy="394.5" r="4" fill="#4f9eb9" stroke="#000" stroke-width="1.200"/><circle cx="342.5" cy="412.5" r="4" fill="#4f9eb9" stroke="#000" stroke-width="1.200"/><circle cx="342.5" cy="430.5" r="4" fill="#4f9eb9" stroke="#000" stroke-width="1.200"/><circle cx="342.5" cy="448.5" r="4" fill="#4f9eb9" stroke="#000" stroke-width="1.200"/><circle cx="342.5" cy="466.5" r="4" fill="#4f9eb9" stroke="#000" stroke-width="1.200"/></svg>
<div class="abs" style="left:962px;top:151px;width:17px;height:312px;background:linear-gradient(to right,#f1efe8,#fefefb)"></div>
<div class="sb" style="left:963px;top:151px;height:16px"></div>
<div class="sb" style="left:963px;top:168px;height:7px"></div>
<div class="sb" style="left:963px;top:446px;height:16px"></div>
<svg style="left:966px;top:156px" width="9" height="6" viewBox="0 0 9 6"><path d="M.8 5l3.700-3.700L8.200 5" fill="none" stroke="#4d6185" stroke-width="2"/></svg>
<svg style="left:966px;top:452px" width="9" height="6" viewBox="0 0 9 6"><path d="M.8 1l3.700 3.700L8.200 1" fill="none" stroke="#4d6185" stroke-width="2"/></svg>
</div></div>
<div class="abs" style="left:624px;top:475px;width:2px;height:2px;background:#0a246a;box-shadow:1px 1px 0 #fff"></div>
<div class="abs" style="left:628px;top:475px;width:2px;height:2px;background:#0a246a;box-shadow:1px 1px 0 #fff"></div>
<div class="abs" style="left:632px;top:475px;width:2px;height:2px;background:#0a246a;box-shadow:1px 1px 0 #fff"></div>
<div class="abs" style="left:636px;top:475px;width:2px;height:2px;background:#0a246a;box-shadow:1px 1px 0 #fff"></div>
<div class="abs" style="left:624px;top:543px;width:2px;height:2px;background:#0a246a;box-shadow:1px 1px 0 #fff"></div>
<div class="abs" style="left:628px;top:543px;width:2px;height:2px;background:#0a246a;box-shadow:1px 1px 0 #fff"></div>
<div class="abs" style="left:632px;top:543px;width:2px;height:2px;background:#0a246a;box-shadow:1px 1px 0 #fff"></div>
<div class="abs" style="left:636px;top:543px;width:2px;height:2px;background:#0a246a;box-shadow:1px 1px 0 #fff"></div>
<div class="abs" style="left:131px;top:352px;width:2px;height:2px;background:#0a246a;box-shadow:1px 1px 0 #fff"></div>
<div class="abs" style="left:135px;top:352px;width:2px;height:2px;background:#0a246a;box-shadow:1px 1px 0 #fff"></div>
<div class="abs" style="left:139px;top:352px;width:2px;height:2px;background:#0a246a;box-shadow:1px 1px 0 #fff"></div>
<div class="abs" style="left:143px;top:352px;width:2px;height:2px;background:#0a246a;box-shadow:1px 1px 0 #fff"></div>
<div class="abs" style="left:269px;top:347px;width:2px;height:2px;background:#0a246a;box-shadow:1px 1px 0 #fff"></div>
<div class="abs" style="left:269px;top:351px;width:2px;height:2px;background:#0a246a;box-shadow:1px 1px 0 #fff"></div>
<div class="abs" style="left:269px;top:355px;width:2px;height:2px;background:#0a246a;box-shadow:1px 1px 0 #fff"></div>
<div class="abs" style="left:269px;top:359px;width:2px;height:2px;background:#0a246a;box-shadow:1px 1px 0 #fff"></div>
<div class="box" style="left:283px;top:503px;width:697px;height:29px"></div>
<div class="t " style="left:286px;top:508px;letter-spacing:-0.02px;">Edits to Index.html and Carousel.html</div>
<div class="box" style="left:283px;top:571px;width:697px;height:51px"></div>
<div class="abs" style="left:284px;top:572px;width:695px;height:49px;overflow:hidden"><div class="abs" style="left:-284px;top:-572px;width:998px;height:668px">
<div class="abs" style="left:284px;top:572px;width:695px;height:21px;background:#ece9d8"></div>
<div class="hd" style="left:333px;top:572px;width:629px;height:21px"></div>
<div class="abs" style="left:284px;top:572px;width:49px;height:17px;background:#faf9f4"></div>
<div class="abs" style="left:284px;top:589px;width:49px;height:3px;background:linear-gradient(to bottom,#e68b2c,#f8a900 34%,#f9c654);border-radius:0 0 3px 3px"></div>
<div class="hsep" style="left:406px;top:575px;height:14px"></div><div class="abs" style="left:407px;top:589px;width:1px;height:3px;background:#f4f2e8"></div>
<div class="hsep" style="left:959px;top:575px;height:14px"></div><div class="abs" style="left:960px;top:589px;width:1px;height:3px;background:#f4f2e8"></div>
<div class="t " style="left:342px;top:576px;letter-spacing:-0.21px;">Action</div>
<div class="t " style="left:416px;top:576px;letter-spacing:-0.44px;">Path</div>
<div class="rh" style="left:284px;top:592px;width:49px;height:16px;line-height:14px">1</div>
<div class="t " style="left:334px;top:594px;letter-spacing:-0.08px;">Modified</div>
<div class="t " style="left:409px;top:594px;letter-spacing:-0.1px;">docs/examples/carousel.html</div>
<div class="abs" style="left:334px;top:608px;width:628px;height:1px;background:#f0eee2"></div>
<div class="rh" style="left:284px;top:608px;width:49px;height:16px;line-height:14px">2</div>
<div class="t " style="left:334px;top:610px;letter-spacing:-0.08px;">Modified</div>
<div class="t " style="left:409px;top:610px;">docs/index.html</div>
<div class="abs" style="left:334px;top:624px;width:628px;height:1px;background:#f0eee2"></div>
<div class="abs" style="left:408px;top:593px;width:1px;height:30px;background:#f0eee2"></div>
<div class="abs" style="left:962px;top:593px;width:17px;height:30px;background:linear-gradient(to right,#f1efe8,#fefefb)"></div>
<div class="sb" style="left:963px;top:593px;height:13px"></div>
<div class="sb" style="left:963px;top:607px;height:13px"></div>
<svg style="left:967px;top:597px" width="7" height="5" viewBox="0 0 7 5"><path d="M.6 4l2.900-2.900L6.400 4" fill="none" stroke="#4d6185" stroke-width="1.800"/></svg>
<svg style="left:967px;top:612px" width="7" height="5" viewBox="0 0 7 5"><path d="M.6 1l2.900 2.900L6.400 1" fill="none" stroke="#4d6185" stroke-width="1.800"/></svg>
</div></div>
<div class="abs" style="left:4px;top:635px;width:990px;height:1px;background:#fbfaf6"></div>
<div class="abs" style="left:4px;top:636px;width:990px;height:1px;background:#fff"></div>
<div class="abs" style="left:4px;top:637px;width:990px;height:1px;background:#e2dfd2"></div>
<div class="abs" style="left:4px;top:638px;width:990px;height:1px;background:#9a978a"></div>
<svg style="left:9px;top:645px" width="13" height="13" viewBox="0 0 13 13"><path d="M6 3H8.900V0L13 4.100 8.900 8.100V5.300H5.300V8H8L3.900 12 0 8H2.900V7Z" fill="url(#gb)"/><circle cx="3.300" cy="3.300" r="3.300" fill="#f2f4ff" stroke="#8896e6" stroke-width=".9"/><path d="M1.600 3.300l1.300 1.400 2.200-2.600" fill="none" stroke="#2a44d8" stroke-width="1.100"/></svg>
<div class="t " style="left:27px;top:646px;letter-spacing:-0.15px;">master</div>
<div class="t " style="left:82px;top:646px;letter-spacing:-0.13px;">3 Modified</div>
<div class="t " style="left:152px;top:646px;letter-spacing:-0.16px;">24 Untracked</div>
<div class="abs" style="left:65px;top:643px;width:2px;height:17px;border-left:1px solid #c5c2b2;border-right:1px solid #fff"></div>
<div class="abs" style="left:135px;top:643px;width:2px;height:17px;border-left:1px solid #c5c2b2;border-right:1px solid #fff"></div>
<div class="abs" style="left:220px;top:643px;width:2px;height:17px;border-left:1px solid #c5c2b2;border-right:1px solid #fff"></div>
<div class="abs" style="left:74px;top:647px;width:2px;height:6px;background:#e02020"></div><div class="abs" style="left:74px;top:655px;width:2px;height:2px;background:#e02020"></div>
<div class="abs" style="left:142px;top:649px;width:7px;height:7px;border:1px solid #444;border-radius:50%"></div>
</body></html>
